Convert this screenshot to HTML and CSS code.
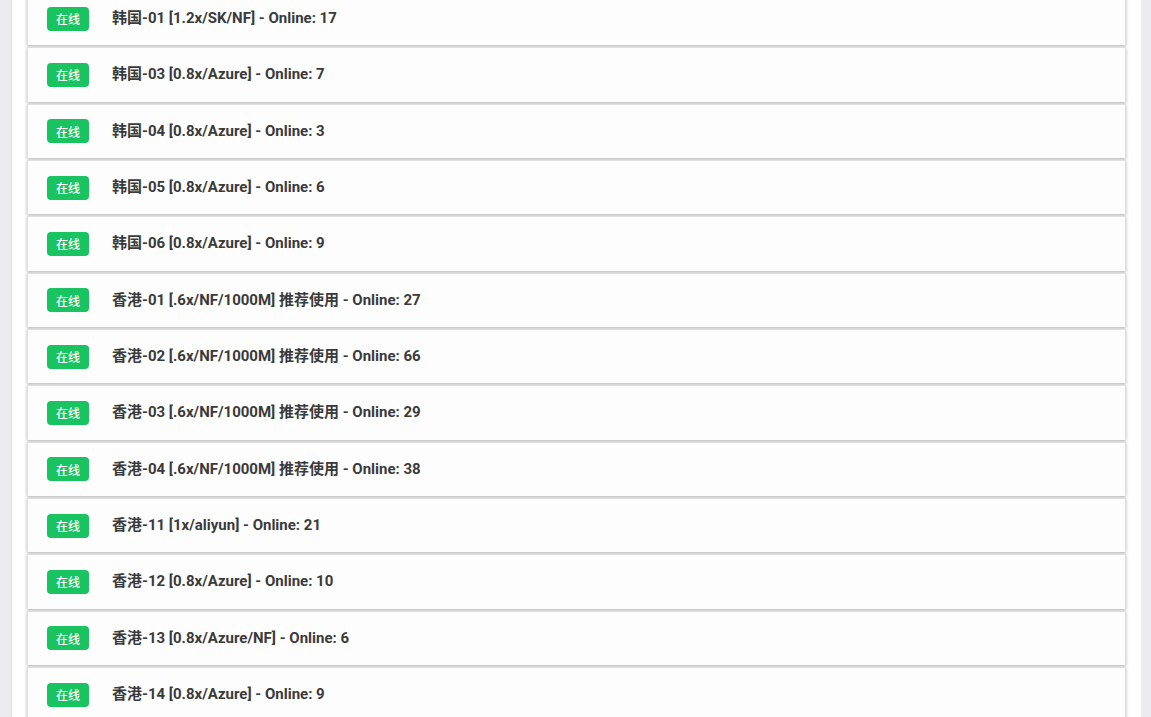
FILE: index.html
```html
<!DOCTYPE html>
<html lang="zh">
<head>
<meta charset="utf-8">
<title>节点列表</title>
<link rel="stylesheet" href="styles.css">
</head>
<body>
<div class="page">
  <div class="list">
    <div class="card"><span class="badge">在线</span><span class="name">韩国-01 [1.2x/SK/NF] - Online: 17</span></div>
    <div class="card"><span class="badge">在线</span><span class="name">韩国-03 [0.8x/Azure] - Online: 7</span></div>
    <div class="card"><span class="badge">在线</span><span class="name">韩国-04 [0.8x/Azure] - Online: 3</span></div>
    <div class="card"><span class="badge">在线</span><span class="name">韩国-05 [0.8x/Azure] - Online: 6</span></div>
    <div class="card"><span class="badge">在线</span><span class="name">韩国-06 [0.8x/Azure] - Online: 9</span></div>
    <div class="card"><span class="badge">在线</span><span class="name">香港-01 [.6x/NF/1000M] 推荐使用 - Online: 27</span></div>
    <div class="card"><span class="badge">在线</span><span class="name">香港-02 [.6x/NF/1000M] 推荐使用 - Online: 66</span></div>
    <div class="card"><span class="badge">在线</span><span class="name">香港-03 [.6x/NF/1000M] 推荐使用 - Online: 29</span></div>
    <div class="card"><span class="badge">在线</span><span class="name">香港-04 [.6x/NF/1000M] 推荐使用 - Online: 38</span></div>
    <div class="card"><span class="badge">在线</span><span class="name">香港-11 [1x/aliyun] - Online: 21</span></div>
    <div class="card"><span class="badge">在线</span><span class="name">香港-12 [0.8x/Azure] - Online: 10</span></div>
    <div class="card"><span class="badge">在线</span><span class="name">香港-13 [0.8x/Azure/NF] - Online: 6</span></div>
    <div class="card"><span class="badge">在线</span><span class="name">香港-14 [0.8x/Azure] - Online: 9</span></div>
  </div>
</div>
</body>
</html>
```

FILE: styles.css
```css
html, body {
  margin: 0;
  padding: 0;
  background: #ececee;
  font-family: Roboto, "Noto Sans CJK SC", sans-serif;
  overflow: hidden;
  height: 717px;
}

.page {
  margin: 0 10px 0 11px;
  background: #ffffff;
  min-height: 717px;
  padding: 0 15px;
  border-left: 1px solid #e4e4e6;
}

.list {
  display: flex;
  flex-direction: column;
  gap: 2px;
  margin-top: -9px;
}

.card {
  display: flex;
  align-items: center;
  height: 54.33px;
  box-sizing: border-box;
  padding-left: 19px;
  background: #fdfdfd;
  border: 1px solid #e0e0e2;
  border-bottom: none;
  box-shadow: 0 1px 3px rgba(0, 0, 0, 0.3);
}

.badge {
  display: inline-flex;
  align-items: center;
  justify-content: center;
  width: 42px;
  height: 24px;
  border-radius: 4px;
  background: #19c35f;
  color: #ffffff;
  font-size: 12px;
  font-weight: 500;
  flex-shrink: 0;
}

.name {
  margin-left: 23px;
  font-size: 15px;
  font-weight: 700;
  color: #3a3a3a;
  line-height: 20px;
  padding-bottom: 1px;
}
```
